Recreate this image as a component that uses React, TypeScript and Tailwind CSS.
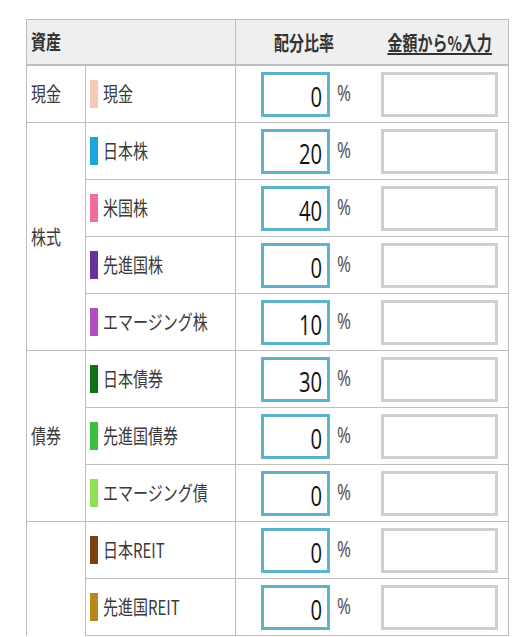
import React from "react";

type Item = { label: string; color: string; value: string };
type Group = { name: string; span: string; last?: boolean; items: Item[] };

const groups: Group[] = [
  { name: "現金", span: "row-span-1", items: [{ label: "現金", color: "#f6cab7", value: "0" }] },
  {
    name: "株式",
    span: "row-span-4",
    items: [
      { label: "日本株", color: "#1ba6de", value: "20" },
      { label: "米国株", color: "#f06e9c", value: "40" },
      { label: "先進国株", color: "#66319a", value: "0" },
      { label: "エマージング株", color: "#b04fc0", value: "10" },
    ],
  },
  {
    name: "債券",
    span: "row-span-3",
    items: [
      { label: "日本債券", color: "#10701a", value: "30" },
      { label: "先進国債券", color: "#3cbf3f", value: "0" },
      { label: "エマージング債", color: "#8fe055", value: "0" },
    ],
  },
  {
    name: "",
    span: "row-span-2",
    last: true,
    items: [
      { label: "日本REIT", color: "#7b4113", value: "0" },
      { label: "先進国REIT", color: "#b8881c", value: "0" },
    ],
  },
];

const jp = "font-['Noto_Sans_CJK_JP','Noto_Sans',sans-serif]";

export default function App() {
  return (
    <div className={`min-h-screen bg-white pt-[19px] pl-[26px] ${jp}`}>
      <div className="w-[483px] border-t border-l border-[#bdbdbd]">
        <div className="grid grid-cols-[59px_150px_136px_137px] grid-rows-[46px] auto-rows-[57px]">
          {/* header */}
          <div className="col-span-2 flex items-center border-r border-b-2 border-[#bdbdbd] bg-[#efefef] pl-1">
            <span className="inline-block origin-left scale-x-75 text-[20px] font-bold text-[#333]">資産</span>
          </div>
          <div className="flex items-center justify-center border-b-2 border-[#bdbdbd] bg-[#efefef] pt-[1px]">
            <span className="inline-block scale-x-75 text-[20px] font-bold text-[#333]">配分比率</span>
          </div>
          <div className="flex items-center justify-center border-r border-b-2 border-[#bdbdbd] bg-[#efefef] pt-[1px]">
            <span className="inline-block scale-x-75 text-[20px] font-bold text-[#333] underline underline-offset-2 whitespace-nowrap">
              金額から%入力
            </span>
          </div>

          {groups.map((g, gi) => (
            <React.Fragment key={gi}>
              <div
                className={`${g.span} flex items-center border-r border-[#bdbdbd] pl-1 ${g.last ? "" : "border-b"}`}
              >
                <span className="inline-block origin-left scale-x-75 text-[20px] text-[#3a3a3a]">{g.name}</span>
              </div>
              {g.items.map((it) => (
                <React.Fragment key={it.label}>
                  <div className="flex items-center border-r border-b border-[#bdbdbd] pl-[4px]">
                    <div className="h-[28px] w-[8px] shrink-0" style={{ backgroundColor: it.color }} />
                    <span className="ml-[5px] inline-block origin-left scale-x-75 whitespace-nowrap text-[20px] text-[#3a3a3a]">
                      {it.label}
                    </span>
                  </div>
                  <div className="flex items-center border-b border-[#bdbdbd] pl-[25px]">
                    <div className="flex h-[45px] w-[69px] shrink-0 items-center justify-end border-[3px] border-[#5fb3c9] bg-white pr-[5px] pt-[3px]">
                      <span className="inline-block origin-right scale-x-[0.72] font-['Open_Sans',sans-serif] text-[28px] leading-none text-[#111]">
                        {it.value}
                      </span>
                    </div>
                    <span className="ml-[7px] inline-block origin-left scale-x-[0.8] font-['Noto_Sans',sans-serif] text-[21px] text-[#555]">
                      %
                    </span>
                  </div>
                  <div className="flex items-center border-r border-b border-[#bdbdbd] pl-[9px]">
                    <div className="h-[45px] w-[117px] border-[3px] border-[#cfcfcf] bg-white" />
                  </div>
                </React.Fragment>
              ))}
            </React.Fragment>
          ))}
        </div>
      </div>
    </div>
  );
}
